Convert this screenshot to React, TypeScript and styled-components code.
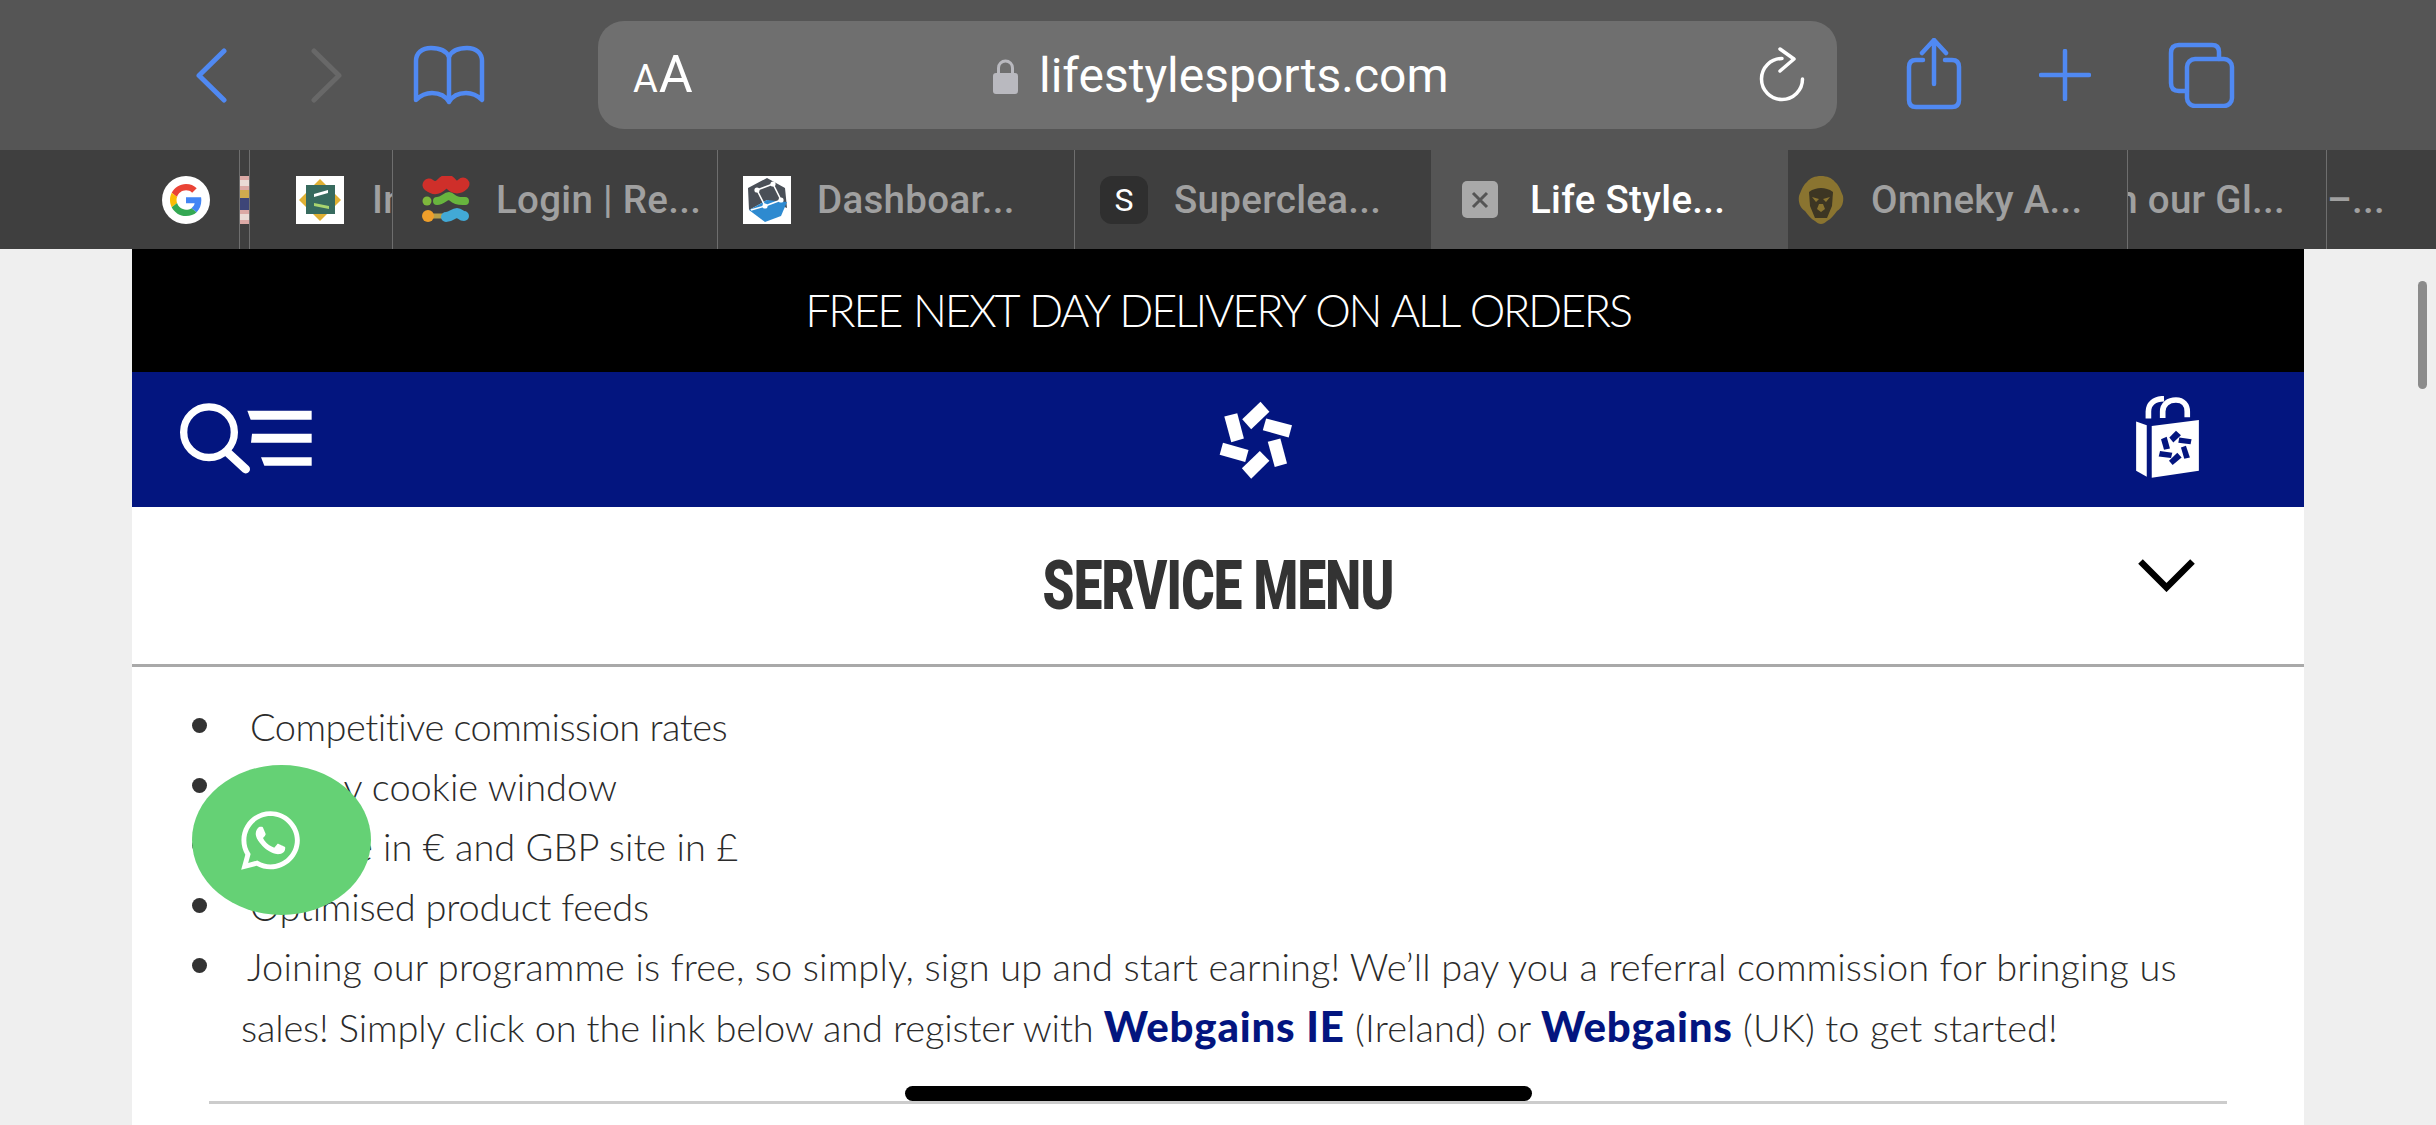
import React from 'react';
import styled, { createGlobalStyle } from 'styled-components';
import { FaWhatsapp } from 'react-icons/fa';

const GlobalStyle = createGlobalStyle`
  html, body {
    margin: 0;
    padding: 0;
    background: #efefef;
  }
`;

const Screen = styled.div`
  position: relative;
  width: 2436px;
  height: 1125px;
  overflow: hidden;
  background: #efefef;
  font-family: 'Lato', 'Liberation Sans', sans-serif;
`;

const Toolbar = styled.div`
  display: flex;
  align-items: center;
  height: 150px;
  padding-left: 196px;
  box-sizing: border-box;
  background: #555555;
`;

const ToolIcon = styled.svg<{ $gap?: number; $shift?: number; $color?: string }>`
  display: block;
  flex: none;
  margin-left: ${props => props.$gap || 0}px;
  margin-top: ${props => props.$shift || 0}px;
  fill: none;
  stroke: ${props => props.$color || '#5089f2'};
  stroke-linecap: round;
  stroke-linejoin: round;
`;

const UrlBar = styled.div`
  display: flex;
  align-items: center;
  flex: none;
  width: 1239px;
  height: 108px;
  margin-left: 113px;
  padding: 0 32px 0 35px;
  box-sizing: border-box;
  border-radius: 26px;
  background: #6f6f6f;
  color: #fff;
  font-family: 'Roboto', 'Liberation Sans', sans-serif;
`;

const TextSize = styled.div`
  display: flex;
  align-items: baseline;
  width: 57px;
  font-size: 52px;
  line-height: 1;
  span {
    font-size: 38px;
    margin-right: 1px;
  }
`;

const Address = styled.div`
  display: flex;
  align-items: center;
  gap: 21px;
  margin: 1px 0 0 303px;
  font-size: 48px;
  line-height: 1;
`;

const Lock = styled.svg`
  display: block;
  flex: none;
`;

const Reload = styled.svg`
  display: block;
  margin-left: auto;
  fill: none;
  stroke: #fff;
  stroke-width: 3.5;
  stroke-linecap: round;
  stroke-linejoin: round;
`;

const TabBar = styled.div`
  display: flex;
  height: 99px;
  background: #3f3f3f;
  font-family: 'Roboto', 'Liberation Sans', sans-serif;
`;

const Tab = styled.div<{ $width: number; $pad?: number; $active?: boolean; $line?: boolean; $right?: number }>`
  display: flex;
  align-items: center;
  justify-content: ${props => (props.$right ? 'flex-end' : 'flex-start')};
  flex: none;
  width: ${props => props.$width}px;
  padding-left: ${props => props.$pad || 0}px;
  padding-right: ${props => props.$right || 0}px;
  box-sizing: border-box;
  overflow: hidden;
  white-space: nowrap;
  background: ${props => (props.$active ? '#555555' : 'transparent')};
  border-left: ${props => (props.$line ? '1px solid #6e6e6e' : '0')};
`;

const TabTitle = styled.span<{ $active?: boolean; $gap?: number }>`
  flex: none;
  margin: 2px 0 0 ${props => props.$gap || 0}px;
  color: ${props => (props.$active ? '#ffffff' : '#a0a0a0')};
  font-size: 38.5px;
  font-weight: 500;
  line-height: 1;
  letter-spacing: 0.3px;
`;

const Favicon = styled.svg`
  display: block;
  flex: none;
  width: 48px;
  height: 48px;
`;

const SlimFavicon = styled.svg`
  display: block;
  flex: none;
  width: 10px;
  height: 48px;
`;

const LetterIcon = styled.div`
  display: flex;
  align-items: center;
  justify-content: center;
  flex: none;
  width: 48px;
  height: 48px;
  border-radius: 12px;
  background: #2f2f2f;
  color: #fff;
  font-size: 32px;
  font-weight: 400;
`;

const CloseBox = styled.div`
  display: flex;
  align-items: center;
  justify-content: center;
  flex: none;
  width: 36px;
  height: 37px;
  border-radius: 5px;
  background: #a9a9a9;
`;

const Page = styled.main`
  width: 2172px;
  height: 876px;
  margin-left: 132px;
  background: #fff;
`;

const Banner = styled.div`
  display: flex;
  align-items: center;
  justify-content: center;
  height: 123px;
  padding-bottom: 1px;
  box-sizing: border-box;
  background: #000;
  color: #fff;
  font-size: 45px;
  font-weight: 300;
  letter-spacing: -2.25px;
  word-spacing: 2px;
`;

const SiteHeader = styled.header`
  display: flex;
  align-items: center;
  height: 135px;
  padding-left: 48px;
  box-sizing: border-box;
  background: #03157f;
`;

const HeaderIcon = styled.svg<{ $gap?: number; $shift?: number }>`
  display: block;
  flex: none;
  margin-left: ${props => props.$gap || 0}px;
  margin-top: ${props => props.$shift || 0}px;
  fill: #fff;
`;

const ServiceRow = styled.div`
  display: grid;
  grid-template-columns: 1fr auto 1fr;
  align-items: center;
  height: 160px;
  box-sizing: border-box;
  border-bottom: 3px solid #a9a9a9;
`;

const ServiceTitle = styled.h2`
  grid-column: 2;
  margin: 0;
  color: #333;
  font-family: 'Roboto', 'Liberation Sans', sans-serif;
  font-size: 68px;
  font-weight: 900;
  line-height: 1;
  letter-spacing: -1px;
  white-space: nowrap;
  transform: scaleX(0.75);
`;

const Chevron = styled.svg`
  display: block;
  justify-self: end;
  margin: 0 109px 21px 0;
  fill: none;
  stroke: #000;
  stroke-width: 6.5;
`;

const Benefits = styled.ul`
  margin: 0;
  padding: 29px 120px 0 109px;
  list-style: none;
  color: #2b2b2b;
  font-size: 38px;
  font-weight: 300;
  line-height: 60px;
`;

const Benefit = styled.li<{ $indent: number; $track?: number }>`
  position: relative;
  text-indent: ${props => props.$indent}px;
  letter-spacing: ${props => props.$track || 0}px;
  &::before {
    content: '';
    position: absolute;
    left: -49px;
    top: 22px;
    width: 15px;
    height: 15px;
    border-radius: 50%;
    background: #333;
  }
`;

const TightText = styled.span`
  letter-spacing: -0.16px;
`;

const PartnerLink = styled.a`
  color: #03157f;
  font-size: 42px;
  font-weight: 900;
  letter-spacing: 0.8px;
`;

const Divider = styled.hr`
  height: 3px;
  margin: 44px 77px 0;
  border: 0;
  background: #cccccc;
`;

const WhatsappButton = styled.div`
  position: absolute;
  left: 192px;
  top: 765px;
  display: flex;
  align-items: center;
  justify-content: center;
  width: 179px;
  height: 150px;
  border-radius: 50%;
  background: #65d175;
  color: #fff;
  font-size: 67px;
  svg {
    margin: 0 22px 0 0;
  }
`;

const HomeIndicator = styled.div`
  position: absolute;
  left: 905px;
  top: 1086px;
  width: 627px;
  height: 15px;
  border-radius: 8px;
  background: #000;
`;

const ScrollThumb = styled.div`
  position: absolute;
  left: 2418px;
  top: 281px;
  width: 9px;
  height: 108px;
  border-radius: 5px;
  background: #8b8b8b;
`;

const logoBars = [
  '245,67 272,97 217,150 190,120',
  '262,118 340,138 330,175 252,153',
  '305,178 325,253 288,264 267,188',
  '243,216 272,245 217,299 189,268',
  '132,191 209,213 199,249 122,227',
  '175,102 195,178 157,189 136,112',
];

const bagBars = [
  '228,180 243,193 220,215 208,200',
  '238,200 275,205 272,220 235,216',
  '258,225 270,260 253,264 243,230',
  '232,246 245,260 218,283 207,270',
  '180,241 217,246 213,262 176,257',
  '200,198 210,233 192,237 183,205',
];

const GoogleIcon = () => (
  <Favicon viewBox="0 0 48 48">
    <circle cx="24" cy="24" r="24" fill="#fff" />
    <g transform="translate(8 8) scale(0.667)">
      <path fill="#EA4335" d="M24 9.5c3.54 0 6.71 1.22 9.21 3.6l6.85-6.85C35.9 2.38 30.47 0 24 0 14.62 0 6.51 5.38 2.56 13.22l7.98 6.19C12.43 13.72 17.74 9.5 24 9.5z" />
      <path fill="#4285F4" d="M46.98 24.55c0-1.57-.15-3.09-.38-4.55H24v9.02h12.94c-.58 2.96-2.26 5.48-4.78 7.18l7.73 6c4.51-4.18 7.09-10.36 7.09-17.65z" />
      <path fill="#FBBC05" d="M10.53 28.59c-.48-1.45-.76-2.99-.76-4.59s.27-3.14.76-4.59l-7.98-6.19C.92 16.46 0 20.12 0 24c0 3.88.92 7.54 2.56 10.78l7.97-6.19z" />
      <path fill="#34A853" d="M24 48c6.48 0 11.93-2.13 15.89-5.81l-7.73-6c-2.15 1.45-4.92 2.3-8.16 2.3-6.26 0-11.57-4.22-13.46-9.91l-7.98 6.19C6.51 42.62 14.62 48 24 48z" />
    </g>
  </Favicon>
);

const SlimIcon = () => (
  <SlimFavicon viewBox="0 0 10 48">
    <rect width="10" height="48" fill="#dba9a5" />
    <rect y="4" width="10" height="6" fill="#eadbd6" />
    <rect y="14" width="10" height="8" fill="#d0ab4f" />
    <rect y="22" width="10" height="12" fill="#3d4578" />
    <rect y="38" width="10" height="6" fill="#eadbd6" />
  </SlimFavicon>
);

const SquareIcon = () => (
  <Favicon viewBox="0 0 48 48">
    <rect width="48" height="48" fill="#fff" />
    <polygon points="24,3 45,24 24,45 3,24" fill="#dfb033" />
    <rect x="10" y="9" width="29" height="29" fill="#376a5e" />
    <polygon points="18,18 32,14 32,17 18,21" fill="#fff" />
    <polygon points="18,27 33,30 33,33 18,30" fill="#a8d46f" />
  </Favicon>
);

const BlobIcon = () => (
  <Favicon viewBox="0 0 48 48" fill="none" strokeLinecap="round">
    <path d="M7 9 C12 13 16 12 20 8 C24 4 26 4 29 8 C33 12 37 12 41 8" stroke="#cf2f2a" strokeWidth="13" />
    <circle cx="5" cy="25" r="4.5" fill="#7eb83c" />
    <path d="M15 25 C21 25 23 20 27 20 C31 20 30 26 43 25" stroke="#68b53e" strokeWidth="8" />
    <path d="M6 40 H22" stroke="#b7a04a" strokeWidth="5" />
    <circle cx="6" cy="40" r="6" fill="#ef9f2b" />
    <path d="M24 41 C30 41 31 37 35 37 C38 37 39 40 42 40" stroke="#42a9d6" strokeWidth="10" />
  </Favicon>
);

const CubeIcon = () => (
  <Favicon viewBox="0 0 48 48">
    <rect width="48" height="48" fill="#fff" />
    <polygon points="24,2 42,12 44,32 24,24 6,34 5,12" fill="#4a4f57" />
    <polygon points="6,34 24,24 44,26 38,40 22,46" fill="#2e8ad0" />
    <path d="M14 14 L30 8 L38 24 L22 30 Z M14 14 L22 30 L8 34" fill="none" stroke="#fff" strokeWidth="1.6" />
    <circle cx="14" cy="14" r="2.6" fill="#fff" />
    <circle cx="30" cy="8" r="2.6" fill="#fff" />
    <circle cx="38" cy="24" r="2.6" fill="#fff" />
    <circle cx="22" cy="30" r="2.6" fill="#fff" />
  </Favicon>
);

const LionIcon = () => (
  <Favicon viewBox="0 0 48 48">
    <path fill="#8a7430" d="M24 0c6 0 11 2 14 6 4 3 6 9 8 14 1 6-1 12-6 15-3 4-6 8-10 10-2 2-4 3-6 3s-4-1-6-3c-4-2-7-6-10-10C3 32 1 26 2 20c2-5 4-11 8-14 3-4 8-6 14-6z" />
    <path fill="#3d3623" d="M12 16c4-3 8-4 12-4s8 1 12 4l-1 14-5 12h-12l-5-12z" />
    <path fill="#8a7430" d="M15 21l7 2-3 3zM33 21l-7 2 3 3zM22 28h4l2 5-4 3-4-3z" />
  </Favicon>
);

export default function App() {
  return (
    <Screen>
      <GlobalStyle />
      <Toolbar>
        <ToolIcon width="31" height="55" viewBox="0 0 31 55" strokeWidth="5">
          <path d="M28 3 L3 27.5 L28 52" />
        </ToolIcon>
        <ToolIcon $gap={84} $color="#686868" width="31" height="55" viewBox="0 0 31 55" strokeWidth="5">
          <path d="M3 3 L28 27.5 L3 52" />
        </ToolIcon>
        <ToolIcon $gap={71} width="72" height="60" viewBox="0 0 72 60" strokeWidth="4.5">
          <path d="M36 12 C33 5 26 3 18 3 C9 3 3 8 3 16 V55 C8 50 13 48 19 48 C26 48 32 50 36 57 C40 50 46 48 53 48 C59 48 64 50 69 55 V16 C69 8 63 3 54 3 C46 3 39 5 36 12 Z M36 12 V57" />
        </ToolIcon>
        <UrlBar>
          <TextSize>
            <span>A</span>A
          </TextSize>
          <Address>
            <Lock width="25" height="36" viewBox="0 0 25 36">
              <path d="M5.5 17 V10 a7 7 0 0 1 14 0 V17" fill="none" stroke="#b9b9bf" strokeWidth="3" />
              <rect y="15" width="25" height="21" rx="3" fill="#b9b9bf" />
            </Lock>
            lifestylesports.com
          </Address>
          <Reload width="46" height="56" viewBox="0 0 46 56">
            <path d="M23 11.5 A20.5 20.5 0 1 0 43.5 32" />
            <path d="M21 2 L35 12 L21 24" />
          </Reload>
        </UrlBar>
        <ToolIcon $gap={69} $shift={-2} width="56" height="72" viewBox="0 0 56 72" strokeWidth="4.5">
          <path d="M17 22 H10 Q3 22 3 29 V62 Q3 69 10 69 H46 Q53 69 53 62 V29 Q53 22 46 22 H39" />
          <path d="M28 2 V46 M16 15 L28 2 L40 15" />
        </ToolIcon>
        <ToolIcon $gap={77} width="52" height="52" viewBox="0 0 52 52" strokeWidth="4.5">
          <path d="M26 2 V50 M2 26 H50" />
        </ToolIcon>
        <ToolIcon $gap={77} width="67" height="66" viewBox="0 0 67 66" strokeWidth="4.5">
          <rect x="19" y="17" width="45" height="47" rx="8" />
          <path d="M51 17 V10 Q51 3 44 3 H11 Q3 3 3 11 V41 Q3 49 11 49 H19" />
        </ToolIcon>
      </Toolbar>

      <TabBar>
        <Tab $width={239} $pad={162}>
          <GoogleIcon />
        </Tab>
        <Tab $width={10} $line>
          <SlimIcon />
        </Tab>
        <Tab $width={143} $line $pad={46}>
          <SquareIcon />
          <TabTitle $gap={28}>Infl</TabTitle>
        </Tab>
        <Tab $width={325} $line $pad={29}>
          <BlobIcon />
          <TabTitle $gap={26}>Login | Re...</TabTitle>
        </Tab>
        <Tab $width={357} $line $pad={25}>
          <CubeIcon />
          <TabTitle $gap={26}>Dashboar...</TabTitle>
        </Tab>
        <Tab $width={357} $line $pad={25}>
          <LetterIcon>S</LetterIcon>
          <TabTitle $gap={26}>Superclea...</TabTitle>
        </Tab>
        <Tab $width={357} $active $pad={31}>
          <CloseBox>
            <svg width="18" height="18" viewBox="0 0 18 18">
              <path d="M2 2 L16 16 M16 2 L2 16" stroke="#555" strokeWidth="3" />
            </svg>
          </CloseBox>
          <TabTitle $active $gap={32}>Life Style...</TabTitle>
        </Tab>
        <Tab $width={339} $pad={9}>
          <LionIcon />
          <TabTitle $gap={26}>Omneky A...</TabTitle>
        </Tab>
        <Tab $width={199} $line $right={41}>
          <TabTitle>Join our Gl...</TabTitle>
        </Tab>
        <Tab $width={110} $line>
          <TabTitle>–...</TabTitle>
        </Tab>
      </TabBar>

      <Page>
        <Banner>FREE NEXT DAY DELIVERY ON ALL ORDERS</Banner>
        <SiteHeader>
          <HeaderIcon $shift={-3} width="132" height="71" viewBox="150 95 396 212">
            <circle cx="237" cy="182" r="76" fill="none" stroke="#fff" strokeWidth="22" />
            <path d="M295 245 L347 293" fill="none" stroke="#fff" strokeWidth="26" strokeLinecap="round" />
            <polygon points="352,118 545,118 545,145 362,145" />
            <polygon points="366,187 545,187 545,214 363,214" />
            <polygon points="393,257 545,257 545,283 403,283" />
          </HeaderIcon>
          <HeaderIcon $gap={907} width="73" height="78" viewBox="120 65 220 235">
            {logoBars.map(points => (
              <polygon key={points} points={points} />
            ))}
          </HeaderIcon>
          <HeaderIcon $gap={843} $shift={-5} width="65" height="83" viewBox="105 75 195 250">
            <polygon points="108,152 140,163 140,318 108,300" />
            <polygon points="155,165 297,147 297,300 155,321" />
            <path d="M145 143 V122 C145 100 160 84 192 83" fill="none" stroke="#fff" strokeWidth="17" />
            <path d="M188 141 V122 C188 100 205 87 228 87 C250 87 262 102 262 122 V139" fill="none" stroke="#fff" strokeWidth="17" />
            {bagBars.map(points => (
              <polygon key={points} points={points} fill="#03157f" />
            ))}
          </HeaderIcon>
        </SiteHeader>
        <ServiceRow>
          <ServiceTitle>SERVICE MENU</ServiceTitle>
          <Chevron width="57" height="33" viewBox="0 0 57 33">
            <path d="M2.5 2.5 L28.5 28.5 L54.5 2.5" />
          </Chevron>
        </ServiceRow>
        <Benefits>
          <Benefit $indent={9} $track={-0.5}>Competitive commission rates</Benefit>
          <Benefit $indent={9}>30 day cookie window</Benefit>
          <Benefit $indent={9}>IRE site in € and GBP site in £</Benefit>
          <Benefit $indent={9} $track={-0.25}>Optimised product feeds</Benefit>
          <Benefit $indent={6} $track={0.1}>
            Joining our programme is free, so simply, sign up and start earning! We’ll pay you a referral commission for bringing us
            <br />
            <TightText>sales! Simply click on the link below and register with </TightText>
            <PartnerLink>Webgains IE</PartnerLink> (Ireland) or <PartnerLink>Webgains</PartnerLink> (UK) to get started!
          </Benefit>
        </Benefits>
        <Divider />
      </Page>

      <ScrollThumb />
      <WhatsappButton>
        <FaWhatsapp />
      </WhatsappButton>
      <HomeIndicator />
    </Screen>
  );
}
